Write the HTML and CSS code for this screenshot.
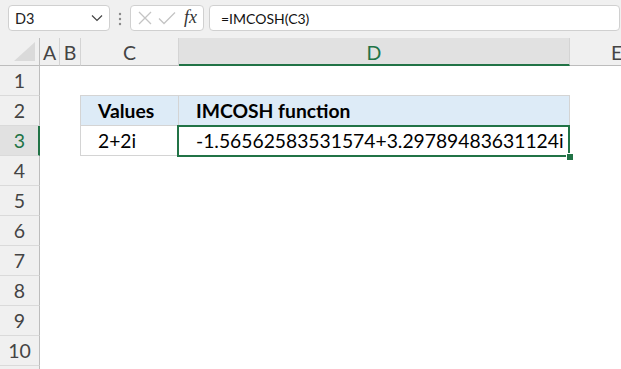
FILE: index.html
```html
<!DOCTYPE html>
<html>
<head>
<meta charset="utf-8">
<link rel="stylesheet" href="styles.css">
</head>
<body>
<div class="toolbar">
  <div class="namebox">
    <span class="name">D3</span>
    <svg class="chev" width="12" height="8" viewBox="0 0 12 8"><path d="M1 1.5 L6 6.5 L11 1.5" fill="none" stroke="#444" stroke-width="1.2"/></svg>
  </div>
  <svg class="dots" width="4" height="14" viewBox="0 0 4 14"><circle cx="2" cy="2" r="1.2" fill="#8a8a8a"/><circle cx="2" cy="7" r="1.2" fill="#8a8a8a"/><circle cx="2" cy="12" r="1.2" fill="#8a8a8a"/></svg>
  <div class="fxbox">
    <svg width="14" height="14" viewBox="0 0 14 14"><path d="M1 1 L13 13 M13 1 L1 13" stroke="#c4c4c4" stroke-width="1.3" fill="none"/></svg>
    <svg width="18" height="14" viewBox="0 0 18 14"><path d="M1 7.5 L6 12.5 L17 1.5" stroke="#c4c4c4" stroke-width="1.3" fill="none"/></svg>
    <span class="fx">fx</span>
  </div>
  <div class="formula">=IMCOSH(C3)</div>
</div>
<div class="sheet">
  <div class="corner"><svg width="22" height="20" viewBox="0 0 22 20"><polygon points="21,0 21,19 0,19" fill="#dadada"/></svg></div>
  <div class="ch">A</div>
  <div class="ch">B</div>
  <div class="ch">C</div>
  <div class="ch sel">D</div>
  <div class="ch last">E</div>

  <div class="rh">1</div><div class="c"></div><div class="c"></div><div class="c"></div><div class="c"></div><div class="c"></div>
  <div class="rh">2</div><div class="c"></div><div class="c"></div><div class="c t th tl tt">Values</div><div class="c t th tt">IMCOSH function</div><div class="c"></div>
  <div class="rh sel">3</div><div class="c"></div><div class="c"></div><div class="c t tl">2+2i</div><div class="c t active">-1.56562583531574+3.29789483631124i<span class="selbox"></span><span class="handle"></span></div><div class="c"></div>
  <div class="rh">4</div><div class="c"></div><div class="c"></div><div class="c"></div><div class="c"></div><div class="c"></div>
  <div class="rh">5</div><div class="c"></div><div class="c"></div><div class="c"></div><div class="c"></div><div class="c"></div>
  <div class="rh">6</div><div class="c"></div><div class="c"></div><div class="c"></div><div class="c"></div><div class="c"></div>
  <div class="rh">7</div><div class="c"></div><div class="c"></div><div class="c"></div><div class="c"></div><div class="c"></div>
  <div class="rh">8</div><div class="c"></div><div class="c"></div><div class="c"></div><div class="c"></div><div class="c"></div>
  <div class="rh">9</div><div class="c"></div><div class="c"></div><div class="c"></div><div class="c"></div><div class="c"></div>
  <div class="rh">10</div><div class="c"></div><div class="c"></div><div class="c"></div><div class="c"></div><div class="c"></div>
  <div class="rh"></div><div class="c"></div><div class="c"></div><div class="c"></div><div class="c"></div><div class="c"></div>
</div>
</body>
</html>
```
FILE: styles.css
```css
* { box-sizing: border-box; }
html, body { margin: 0; padding: 0; }
body {
  width: 621px;
  height: 369px;
  overflow: hidden;
  background: #ffffff;
  font-family: Lato, "Open Sans", sans-serif;
  color: #000;
}
.toolbar {
  height: 38px;
  background: #f0f0f0;
  display: flex;
  align-items: flex-start;
  padding: 5px 0 0 8px;
}
.namebox {
  width: 102px;
  height: 26px;
  background: #fff;
  border: 1px solid #d0d0d0;
  border-radius: 4px;
  display: flex;
  align-items: center;
  justify-content: space-between;
  padding: 1px 6px 0 6px;
  font-size: 14.5px;
  color: #222;
}
.chev { margin-top: -1px; }
.dots { margin: 7px 0 0 8px; }
.fxbox {
  margin-left: 8px;
  width: 74px;
  height: 26px;
  background: #fff;
  border: 1px solid #d0d0d0;
  border-radius: 4px;
  display: flex;
  align-items: center;
  gap: 6px;
  padding-left: 7px;
}
.fx {
  font-family: "Liberation Serif", serif;
  font-style: italic;
  font-size: 18px;
  color: #333;
  margin-left: 2px;
  margin-top: -2px;
}
.formula {
  margin-left: 5px;
  width: 411px;
  height: 26px;
  background: #fff;
  border: 1px solid #d0d0d0;
  border-radius: 4px;
  font-size: 14px;
  line-height: 24px;
  padding: 1px 0 0 11px;
  color: #111;
}
.sheet {
  display: grid;
  grid-template-columns: 40px 20px 21px 98px 391px 52px;
  grid-template-rows: 28px;
  grid-auto-rows: 30px;
  width: 621px;
  height: 331px;
  overflow: hidden;
}
.corner {
  background: #f0f0f0;
  border-right: 1px solid #bdbdbd;
  border-bottom: 1px solid #bdbdbd;
  display: flex;
  align-items: flex-end;
  justify-content: flex-end;
  padding: 0 3px 3px 0;
}
.ch {
  background: #f0f0f0;
  border-right: 1px solid #d4d4d4;
  border-bottom: 1px solid #bdbdbd;
  text-align: center;
  font-size: 19.5px;
  line-height: 28px;
  padding-top: 1px;
  color: #444;
}
.ch.last {
  text-align: left;
  padding-left: 41px;
  border-right: none;
  overflow: hidden;
}
.ch.sel {
  background: #e1e1e1;
  color: #217346;
  border-bottom: 2px solid #217346;
}
.rh {
  background: #f0f0f0;
  border-right: 1px solid #bdbdbd;
  border-bottom: 1px solid #dadada;
  text-align: center;
  font-size: 19.5px;
  line-height: 30px;
  color: #444;
}
.rh.sel {
  background: #e1e1e1;
  color: #217346;
  border-right: 2px solid #217346;
  padding-left: 1px;
}
.c { background: #fff; }
.t {
  font-size: 19.3px;
  line-height: 30px;
  padding-left: 17px;
  white-space: nowrap;
  border-right: 1px solid #d4d4d4;
  border-bottom: 1px solid #d4d4d4;
}
.th { background: #ddebf7; font-weight: bold; }
.tl { box-shadow: -1px 0 0 #d4d4d4; }
.tt { box-shadow: 0 -1px 0 #d4d4d4; }
.tl.tt { box-shadow: -1px 0 0 #d4d4d4, 0 -1px 0 #d4d4d4, -1px -1px 0 #d4d4d4; }
.active { position: relative; }
.selbox {
  position: absolute;
  left: -2px;
  top: -1px;
  right: -1px;
  bottom: -2px;
  border: 2px solid #217346;
}
.handle {
  position: absolute;
  right: -4px;
  bottom: -5px;
  width: 7px;
  height: 7px;
  background: #217346;
  border: 1px solid #fff;
  border-width: 1px 0 0 1px;
}
```
